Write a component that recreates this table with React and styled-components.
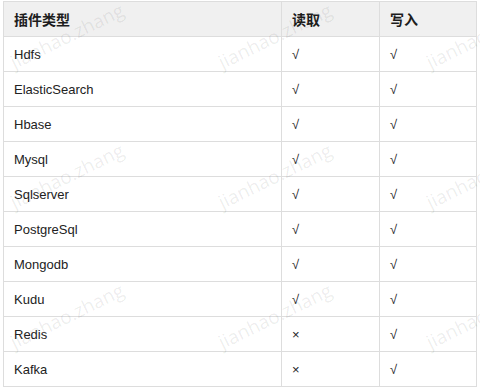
import React from 'react';
import styled, { createGlobalStyle } from 'styled-components';

const GlobalStyle = createGlobalStyle`
  html, body {
    margin: 0;
    padding: 0;
    background: #fff;
  }
  body {
    font-family: "Liberation Sans", Arial, "Noto Sans CJK SC", sans-serif;
    color: #222;
  }
`;

const Page = styled.div`
  position: relative;
  width: 480px;
  height: 392px;
  overflow: hidden;
  padding: 1px 0 0 3px;
  box-sizing: border-box;
`;

const Table = styled.table`
  border-collapse: collapse;
  table-layout: fixed;
  width: 473px;
  font-size: 13px;
`;

const HeadCell = styled.th`
  height: 34px;
  padding: 0 10px;
  text-align: left;
  font-size: 14px;
  font-weight: bold;
  font-family: "Noto Sans CJK SC", sans-serif;
  color: #1d1d1d;
  background: #f0f0f0;
  border: 1px solid #dddddd;
`;

const Cell = styled.td`
  height: 34px;
  padding: 0 10px;
  color: #222;
  border: 1px solid #dddddd;
`;

// watermark tiles laid over the table
const Watermarks = styled.div`
  position: absolute;
  left: -37px;
  top: -34px;
  display: grid;
  grid-template-columns: repeat(3, 208px);
  grid-auto-rows: 140px;
  pointer-events: none;
`;

const Mark = styled.span`
  display: flex;
  align-items: center;
  justify-content: center;
  font-family: "Open Sans", "Liberation Sans", sans-serif;
  font-size: 19px;
  color: rgba(0, 0, 0, 0.08);
  transform: rotate(-26deg);
  white-space: nowrap;
`;

const plugins = [
  ['Hdfs', '√', '√'],
  ['ElasticSearch', '√', '√'],
  ['Hbase', '√', '√'],
  ['Mysql', '√', '√'],
  ['Sqlserver', '√', '√'],
  ['PostgreSql', '√', '√'],
  ['Mongodb', '√', '√'],
  ['Kudu', '√', '√'],
  ['Redis', '×', '√'],
  ['Kafka', '×', '√'],
];

export default function App() {
  return (
    <Page>
      <GlobalStyle />
      <Table>
        <colgroup>
          <col style={{ width: 278 }} />
          <col style={{ width: 98 }} />
          <col style={{ width: 97 }} />
        </colgroup>
        <thead>
          <tr>
            <HeadCell>插件类型</HeadCell>
            <HeadCell>读取</HeadCell>
            <HeadCell>写入</HeadCell>
          </tr>
        </thead>
        <tbody>
          {plugins.map(([name, read, write]) => (
            <tr key={name}>
              <Cell>{name}</Cell>
              <Cell>{read}</Cell>
              <Cell>{write}</Cell>
            </tr>
          ))}
        </tbody>
      </Table>
      <Watermarks>
        {Array.from({ length: 9 }).map((_, i) => (
          <Mark key={i}>jianhao.zhang</Mark>
        ))}
      </Watermarks>
    </Page>
  );
}
